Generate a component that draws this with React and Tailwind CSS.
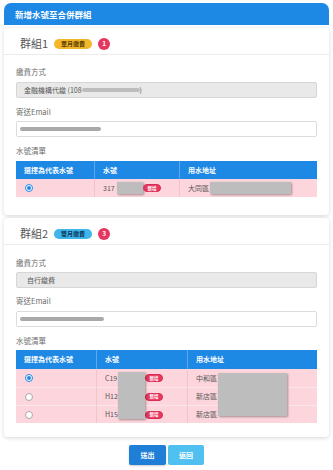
import React from "react";

const Label = ({ children, className = "" }) => (
  <div className={"text-[7.5px] leading-[10px] text-[#6b6b6b] " + className}>{children}</div>
);

const Radio = ({ checked }) =>
  checked ? (
    <span className="flex h-[8px] w-[8px] items-center justify-center rounded-full border border-[#1e88e5] bg-white">
      <span className="h-[4px] w-[4px] rounded-full bg-[#1e88e5]" />
    </span>
  ) : (
    <span className="h-[8px] w-[8px] rounded-full border border-[#a8a8a8] bg-white" />
  );

const NewBadge = () => (
  <span className="flex h-[8px] w-[18px] items-center justify-center rounded-full border border-[#d92c54] bg-[#e8385f] text-[4.5px] font-bold leading-none text-white">
    新增
  </span>
);

const Redact = ({ className = "" }) => (
  <span className={"block bg-[#bdbdbd] shadow-[1px_1px_2px_rgba(0,0,0,0.35)] " + className} />
);

const Blur = ({ className = "" }) => (
  <span className={"block rounded-full bg-[#a9a9a9] blur-[0.7px] " + className} />
);

function GroupHeader({ title, badge, badgeClass, count }) {
  return (
    <div className="flex h-[27px] items-center border-b border-[#ececec] pl-[16px] pt-[5px]">
      <span className="text-[11px] leading-none text-[#555]">{title}</span>
      <span className={"ml-[6px] flex h-[10px] w-[38px] items-center justify-center rounded-full text-[6px] font-bold leading-none " + badgeClass}>
        {badge}
      </span>
      <span className="ml-[6px] flex h-[12px] w-[12px] items-center justify-center rounded-full bg-[#e6355f] text-[6.5px] font-bold leading-none text-white">
        {count}
      </span>
    </div>
  );
}

export default function App() {
  return (
    <div className="h-[470px] w-[333px] overflow-hidden bg-white px-[4px] pt-[3px] font-['Noto_Sans_CJK_TC','Noto_Sans',sans-serif]">
      <div className="flex h-[22px] items-center rounded-t-[7px] bg-[#1e88e5] px-[11px] text-[8.5px] font-bold text-white">
        新增水號至合併群組
      </div>

      {/* Group 1 */}
      <div className="mt-[3px] rounded-[4px] bg-white shadow-[0_1px_4px_rgba(0,0,0,0.16)]">
        <GroupHeader title="群組1" badge="單月繳費" badgeClass="bg-[#f3b72b] text-[#5a3d00]" count="1" />
        <div className="px-[12px] pb-[18px] pt-[12px]">
          <Label className="mb-[5px]">繳費方式</Label>
          <div className="flex h-[16px] items-center rounded-[2px] border border-[#d6d6d6] bg-[#e9e9e9] pl-[7px] text-[7px] text-[#555]">
            <span>金融機構代繳 (108</span>
            <Blur className="h-[4px] w-[58px] rounded-[1px] bg-[#bdbdbd]" />
            <span>)</span>
          </div>
          <Label className="mb-[4px] mt-[9px]">寄送Email</Label>
          <div className="flex h-[16px] items-center rounded-[2px] border border-[#dcdcdc] bg-white pl-[3px]">
            <Blur className="h-[4px] w-[81px]" />
          </div>
          <Label className="mb-[5px] mt-[9px]">水號清單</Label>
          <div className="grid grid-cols-[79px_85px_137px] text-[7px]">
            <div className="flex h-[18px] items-center border-r border-[#5ba8ee] bg-[#1e88e5] pl-[8px] font-bold text-white">選擇為代表水號</div>
            <div className="flex h-[18px] items-center border-r border-[#5ba8ee] bg-[#1e88e5] pl-[8px] font-bold text-white">水號</div>
            <div className="flex h-[18px] items-center bg-[#1e88e5] pl-[8px] font-bold text-white">用水地址</div>

            <div className="flex h-[18px] items-center border-r border-[#f3c3cc] bg-[#fdd6dd] pl-[9px]"><Radio checked /></div>
            <div className="flex h-[18px] items-center border-r border-[#f3c3cc] bg-[#fdd6dd] pl-[8px] text-[#555]">
              <span className="flex w-[40px] items-center">317<Redact className="ml-[2px] h-[12px] w-[26px]" /></span>
              <NewBadge />
            </div>
            <div className="flex h-[18px] items-center bg-[#fdd6dd] pl-[8px] text-[#555]">
              <span>大同區</span>
              <Redact className="ml-[1px] h-[12px] w-[81px]" />
            </div>
          </div>
        </div>
      </div>

      {/* Group 2 */}
      <div className="mt-[3px] rounded-[4px] bg-white shadow-[0_1px_4px_rgba(0,0,0,0.16)]">
        <GroupHeader title="群組2" badge="雙月繳費" badgeClass="bg-[#3fb5ea] text-[#0b3a63]" count="3" />
        <div className="px-[12px] pb-[14px] pt-[13px]">
          <Label className="mb-[4px]">繳費方式</Label>
          <div className="flex h-[16px] items-center rounded-[2px] border border-[#d6d6d6] bg-[#e9e9e9] pl-[10px] text-[7px] text-[#555]">
            自行繳費
          </div>
          <Label className="mb-[5px] mt-[8px]">寄送Email</Label>
          <div className="flex h-[16px] items-center rounded-[2px] border border-[#dcdcdc] bg-white pl-[3px]">
            <Blur className="h-[4px] w-[84px]" />
          </div>
          <Label className="mb-[4px] mt-[9px]">水號清單</Label>
          <div className="relative grid grid-cols-[81px_91px_129px] text-[7px]">
            <div className="flex h-[19px] items-center border-r border-[#5ba8ee] bg-[#1e88e5] pl-[8px] font-bold text-white">選擇為代表水號</div>
            <div className="flex h-[19px] items-center border-r border-[#5ba8ee] bg-[#1e88e5] pl-[8px] font-bold text-white">水號</div>
            <div className="flex h-[19px] items-center bg-[#1e88e5] pl-[8px] font-bold text-white">用水地址</div>

            {[
              { r: true, n: "C19", a: "中和區" },
              { r: false, n: "H12", a: "新店區" },
              { r: false, n: "H15", a: "新店區", blur: true },
            ].map((row, i) => (
              <React.Fragment key={i}>
                <div className={"flex h-[18px] items-center border-r border-[#f3c3cc] bg-[#fdd6dd] pl-[9px] " + (i > 0 ? "border-t border-t-[#fbe6ea]" : "")}>
                  <Radio checked={row.r} />
                </div>
                <div className={"flex h-[18px] items-center border-r border-[#f3c3cc] bg-[#fdd6dd] pl-[8px] text-[#555] " + (i > 0 ? "border-t border-t-[#fbe6ea]" : "")}>
                  <span className="w-[40px]">{row.n}</span>
                  <NewBadge />
                </div>
                <div className={"flex h-[18px] items-center bg-[#fdd6dd] pl-[8px] text-[#555] " + (i > 0 ? "border-t border-t-[#fbe6ea]" : "")}>
                  <span>{row.a}</span>
                  {row.blur && <Blur className="ml-[2px] h-[3px] w-[64px] bg-[#b9a9ad]" />}
                </div>
              </React.Fragment>
            ))}

            <Redact className="absolute left-[102px] top-[22px] h-[47px] w-[27px]" />
            <Redact className="absolute left-[202px] top-[23px] h-[43px] w-[69px]" />
          </div>
        </div>
      </div>

      <div className="mt-[8px] flex justify-center gap-[2px]">
        <button className="flex h-[20px] w-[37px] items-center justify-center rounded-[2px] bg-[#1f7fd6] text-[7px] font-bold text-white shadow-[0_1px_2px_rgba(0,0,0,0.2)]">送出</button>
        <button className="flex h-[20px] w-[36px] items-center justify-center rounded-[2px] bg-[#4fc0ef] text-[7px] font-bold text-white">返回</button>
      </div>
    </div>
  );
}
